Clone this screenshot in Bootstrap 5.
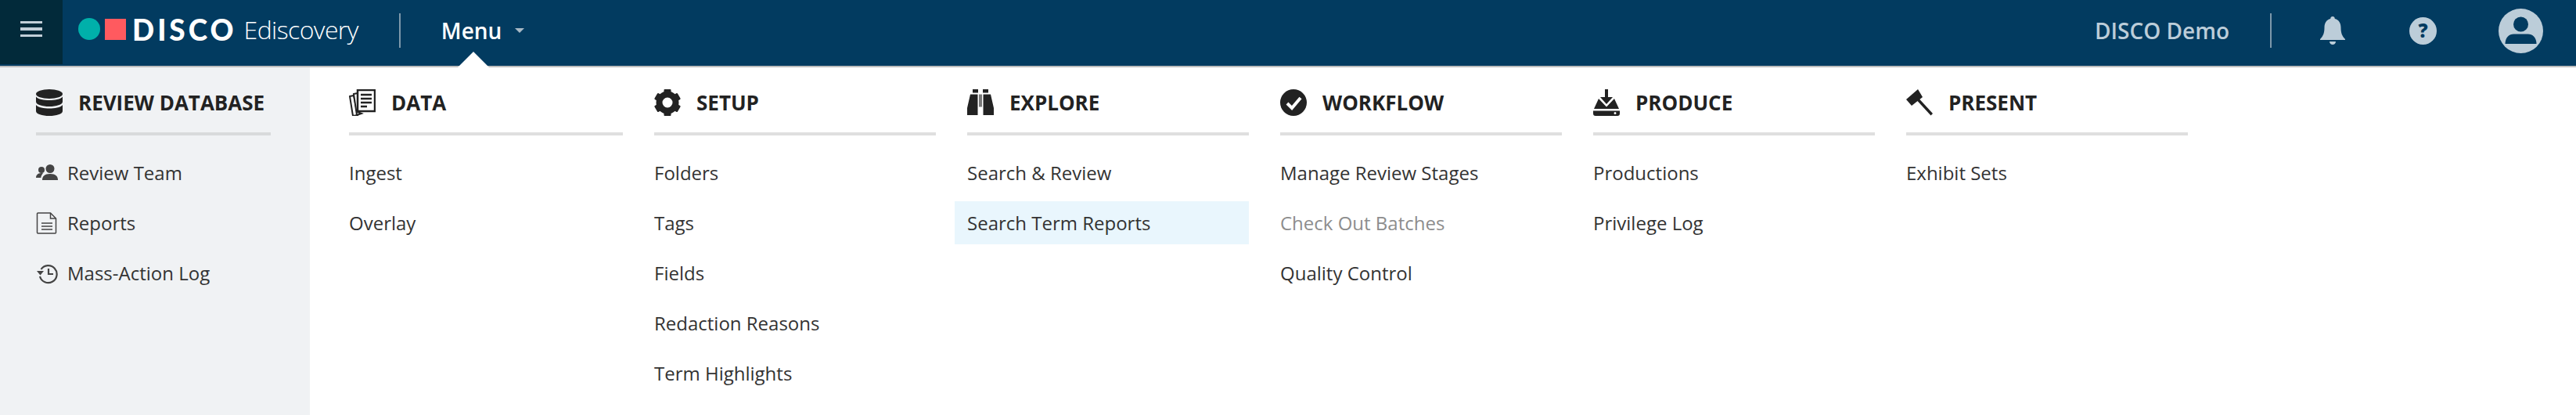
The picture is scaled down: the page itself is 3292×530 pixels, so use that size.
<!DOCTYPE html>
<html lang="en">
<head>
    <meta charset="UTF-8">
    <meta name="viewport" content="width=device-width, initial-scale=1.0">
    <title>DISCO Ediscovery</title>
    <link href="https://cdn.jsdelivr.net/npm/bootstrap@5.3.0/dist/css/bootstrap.min.css" rel="stylesheet">
    <style>
        html, body { height: 530px; overflow: hidden; }
        body { font-family: "Open Sans", sans-serif; background: #fff; color: #2b2b2b; }

        .topbar { height: 84px; background: #023b60; padding: 0; flex-wrap: nowrap; box-shadow: 0 2px 0 #bdbdbd; position: relative; z-index: 2; }
        .burger { width: 80px; height: 82px; background: #022a3a; flex-direction: column; gap: 5px; padding-bottom: 8px; flex: none; }
        .burger span { display: block; width: 28px; height: 3.5px; background: #c2cfd8; }
        .bar-side { height: 84px; padding-bottom: 6px; }
        .logo-wrap { margin-bottom: 4px; }
        .logo-dot { width: 28px; height: 28px; border-radius: 50%; background: #00b0aa; margin-left: 20px; }
        .logo-sq { width: 27px; height: 27px; background: #ff5a5f; margin-left: 6px; }
        .logo-word { font-family: Lato, sans-serif; font-weight: 900; font-size: 37px; line-height: 1; letter-spacing: 4px; color: #fff; margin-left: 8px; }
        .logo-sub { font-weight: 300; font-size: 32px; line-height: 1; color: #fff; margin-left: 9px; margin-top: 2px; letter-spacing: -.6px; }
        .bar-sep { width: 2px; height: 44px; background: #7d98ab; }
        .sep-left { margin-left: 52px; }
        .menu-toggle { font-weight: 600; font-size: 28px; color: #fff; line-height: 1; margin-left: 52px; }
        .menu-caret { width: 0; height: 0; border-left: 6px solid transparent; border-right: 6px solid transparent; border-top: 6px solid #a9bac6; margin-left: 17px; }
        .notch { position: absolute; left: 585px; top: 66px; width: 0; height: 0; border-left: 20px solid transparent; border-right: 20px solid transparent; border-bottom: 20px solid #fff; }
        .acct-name { font-weight: 600; font-size: 28px; color: #bccdd9; line-height: 1; white-space: nowrap; }
        .acct-sep { margin-left: 52px; }
        .bell-ico { margin-left: 62px; }
        .help-ico { margin-left: 82px; }
        .user-ico { margin-left: 79px; margin-right: 42px; }

        .menu-area { height: 446px; }
        .side-pane { width: 396px; background: #f0f2f4; padding-left: 46px; flex: none; }
        .side-pane .group-wrap { width: 300px; }
        .main-pane { padding-left: 50px; }
        .group-wrap { width: 360px; margin-right: 40px; flex: none; }
        .group-wrap.first { width: 350px; }
        .group-head { height: 89px; border-bottom: 4px solid #dfdfdf; padding-top: 30px; padding-bottom: 21px; }
        .side-pane .group-head { border-bottom-color: #d8dadb; }
        .head-ico { width: 34px; height: 34px; flex: none; margin-right: 20px; color: #222; }
        .head-txt { font-weight: 700; font-size: 26px; line-height: 34px; color: #222; white-space: nowrap; }
        .entry-list { margin: 20px 0 0; padding: 0; list-style: none; }
        .entry { height: 55px; margin-bottom: 9px; margin-left: -16px; padding-left: 16px; font-size: 24px; line-height: 55px; color: #333; white-space: nowrap; display: flex; align-items: center; }
        .entry.hot { background: #e9f6fd; }
        .entry.off { color: #8d8d8d; }
        .side-ico { width: 28px; height: 28px; flex: none; margin-right: 12px; color: #444; }
    </style>
</head>
<body>
    <nav class="navbar topbar">
        <div class="burger d-flex align-items-center justify-content-center align-self-start"><span></span><span></span><span></span></div>
        <div class="bar-side d-flex align-items-center">
            <div class="logo-wrap d-flex align-items-center">
                <div class="logo-dot"></div>
                <div class="logo-sq"></div>
                <div class="logo-word">DISCO</div>
                <div class="logo-sub">Ediscovery</div>
            </div>
            <div class="bar-sep sep-left"></div>
            <div class="menu-toggle d-flex align-items-center">Menu<span class="menu-caret"></span></div>
        </div>
        <div class="notch"></div>
        <div class="bar-side d-flex align-items-center ms-auto">
            <div class="acct-name">DISCO Demo</div>
            <div class="bar-sep acct-sep"></div>
            <svg class="bell-ico" width="32" height="36" viewBox="0 0 32 36" fill="#bccdd9"><path d="M16 0c1.7 0 2.8 1.200 2.800 3 5.200 1.300 7.700 5.500 7.700 11 0 7 1.500 11 5.500 15v1H0v-1c4-4 5.500-8 5.500-15 0-5.500 2.500-9.700 7.700-11C13.200 1.200 14.300 0 16 0zM12 32h8c0 2.500-2 4-4 4s-4-1.500-4-4z"/></svg>
            <svg class="help-ico" width="35" height="35" viewBox="0 0 35 35"><circle cx="17.500" cy="17.500" r="17.500" fill="#bccdd9"/><text x="17.500" y="26" text-anchor="middle" font-family="Open Sans" font-weight="800" font-size="24" fill="#023b60">?</text></svg>
            <svg class="user-ico" width="57" height="57" viewBox="0 0 57 57"><circle cx="28.500" cy="28.500" r="28.500" fill="#bccdd9"/><circle cx="28.500" cy="20" r="9.500" fill="#023b60"/><path d="M8.500 45c0-8 5-12.500 11-12.500h18c6 0 11 4.500 11 12.500z" fill="#023b60"/></svg>
        </div>
    </nav>

    <div class="menu-area d-flex">
        <aside class="side-pane">
            <div class="group-wrap">
                <div class="group-head d-flex align-items-center">
                    <svg class="head-ico" viewBox="0 0 34 34" fill="currentColor"><ellipse cx="17" cy="6" rx="17" ry="6"/><path d="M0 9.500C3 13 10 14 17 14s14-1 17-4.500V16c0 3.500-8 6-17 6S0 19.500 0 16z"/><path d="M0 20c3 3.500 10 4.500 17 4.500S31 23.500 34 20v8c0 3.500-8 6-17 6S0 31.500 0 28z"/></svg>
                    <span class="head-txt">REVIEW DATABASE</span>
                </div>
                <ul class="entry-list">
                    <li class="entry"><svg class="side-ico" viewBox="0 0 28 28" fill="currentColor"><circle cx="18" cy="8.500" r="5.500"/><path d="M8 23c0-5 3-8 10-8s10 3 10 8z"/><circle cx="7" cy="10" r="4"/><path d="M0 20c0-3 2-6 7-6 .7 0 1.400 0 2 .2C7.500 16 6.500 17.500 6.300 20z"/></svg>Review Team</li>
                    <li class="entry"><svg class="side-ico" viewBox="0 0 28 28" fill="none" stroke="currentColor" stroke-width="1.500"><path d="M2.500 1h16l7 7v18a1 1 0 0 1-1 1h-22a1 1 0 0 1-1-1V2a1 1 0 0 1 1-1z"/><path d="M18.500 1v7h7M7 14h14M7 18h14M7 22h14"/></svg>Reports</li>
                    <li class="entry"><svg class="side-ico" viewBox="0 0 28 28" fill="none" stroke="currentColor" stroke-width="2.200"><path d="M6.500 9A11 11 0 1 1 5 18"/><path d="M16 8v7h6"/><path d="M1 11h9l-4.500 5.500z" fill="currentColor" stroke="none"/></svg>Mass-Action Log</li>
                </ul>
            </div>
        </aside>

        <main class="main-pane d-flex">
            <div class="group-wrap first">
                <div class="group-head d-flex align-items-center">
                    <svg class="head-ico" viewBox="0 0 34 34"><path d="M1 9l5-1 5 25-6 1z" fill="#fff" stroke="#222" stroke-width="2"/><path d="M6 6l5-1v24l5 2-6 2z" fill="#fff" stroke="#222" stroke-width="2"/><rect x="11" y="1" width="22" height="27" fill="#fff" stroke="#222" stroke-width="2.500"/><path d="M15 7h14M15 12h14M15 17h14M15 22h8" stroke="#222" stroke-width="2.500"/></svg>
                    <span class="head-txt">DATA</span>
                </div>
                <ul class="entry-list">
                    <li class="entry">Ingest</li>
                    <li class="entry">Overlay</li>
                </ul>
            </div>
            <div class="group-wrap">
                <div class="group-head d-flex align-items-center">
                    <svg class="head-ico" viewBox="0 0 34 34" fill="currentColor"><circle cx="17" cy="17" r="10.500" fill="none" stroke="currentColor" stroke-width="8"/><g id="gear-tooth"><rect x="12.500" y="0" width="9" height="7" rx="1"/><rect x="12.500" y="27" width="9" height="7" rx="1"/></g><g transform="rotate(60 17 17)"><rect x="12.500" y="0" width="9" height="7" rx="1"/><rect x="12.500" y="27" width="9" height="7" rx="1"/></g><g transform="rotate(120 17 17)"><rect x="12.500" y="0" width="9" height="7" rx="1"/><rect x="12.500" y="27" width="9" height="7" rx="1"/></g></svg>
                    <span class="head-txt">SETUP</span>
                </div>
                <ul class="entry-list">
                    <li class="entry">Folders</li>
                    <li class="entry">Tags</li>
                    <li class="entry">Fields</li>
                    <li class="entry">Redaction Reasons</li>
                    <li class="entry">Term Highlights</li>
                </ul>
            </div>
            <div class="group-wrap">
                <div class="group-head d-flex align-items-center">
                    <svg class="head-ico" viewBox="0 0 34 34" fill="currentColor"><rect x="7" y="0" width="7" height="4.500"/><rect x="20" y="0" width="7" height="4.500"/><path d="M4 6.500h9.500V33H0v-9zM20.500 6.500H30l4 17.500v9H20.500z"/><rect x="15" y="6.500" width="4" height="16" fill="#777"/></svg>
                    <span class="head-txt">EXPLORE</span>
                </div>
                <ul class="entry-list">
                    <li class="entry">Search &amp; Review</li>
                    <li class="entry hot">Search Term Reports</li>
                </ul>
            </div>
            <div class="group-wrap">
                <div class="group-head d-flex align-items-center">
                    <svg class="head-ico" viewBox="0 0 34 34"><circle cx="17" cy="17" r="17" fill="#222"/><path d="M9 18l6 6 11-13" fill="none" stroke="#fff" stroke-width="4"/></svg>
                    <span class="head-txt">WORKFLOW</span>
                </div>
                <ul class="entry-list">
                    <li class="entry">Manage Review Stages</li>
                    <li class="entry off">Check Out Batches</li>
                    <li class="entry">Quality Control</li>
                </ul>
            </div>
            <div class="group-wrap">
                <div class="group-head d-flex align-items-center">
                    <svg class="head-ico" viewBox="0 0 34 34" fill="currentColor"><path d="M15 0h4v10h6l-8 9-8-9h6z"/><path d="M7 12l10 10.500L27 12l6 13H1z"/><path fill-rule="evenodd" d="M0 27.500h34V31a3 3 0 0 1-3 3H3a3 3 0 0 1-3-3zM28 29a1.500 1.500 0 1 0 0 3 1.500 1.500 0 0 0 0-3z"/></svg>
                    <span class="head-txt">PRODUCE</span>
                </div>
                <ul class="entry-list">
                    <li class="entry">Productions</li>
                    <li class="entry">Privilege Log</li>
                </ul>
            </div>
            <div class="group-wrap">
                <div class="group-head d-flex align-items-center">
                    <svg class="head-ico" viewBox="0 0 34 34" fill="currentColor"><path d="M0 13L15 0l6 10L7 21z"/><path d="M14 14.500l2.500-2.500L34 31l-2.500 2.500z"/></svg>
                    <span class="head-txt">PRESENT</span>
                </div>
                <ul class="entry-list">
                    <li class="entry">Exhibit Sets</li>
                </ul>
            </div>
        </main>
    </div>

    <script src="https://cdn.jsdelivr.net/npm/bootstrap@5.3.0/dist/js/bootstrap.bundle.min.js"></script>
</body>
</html>
